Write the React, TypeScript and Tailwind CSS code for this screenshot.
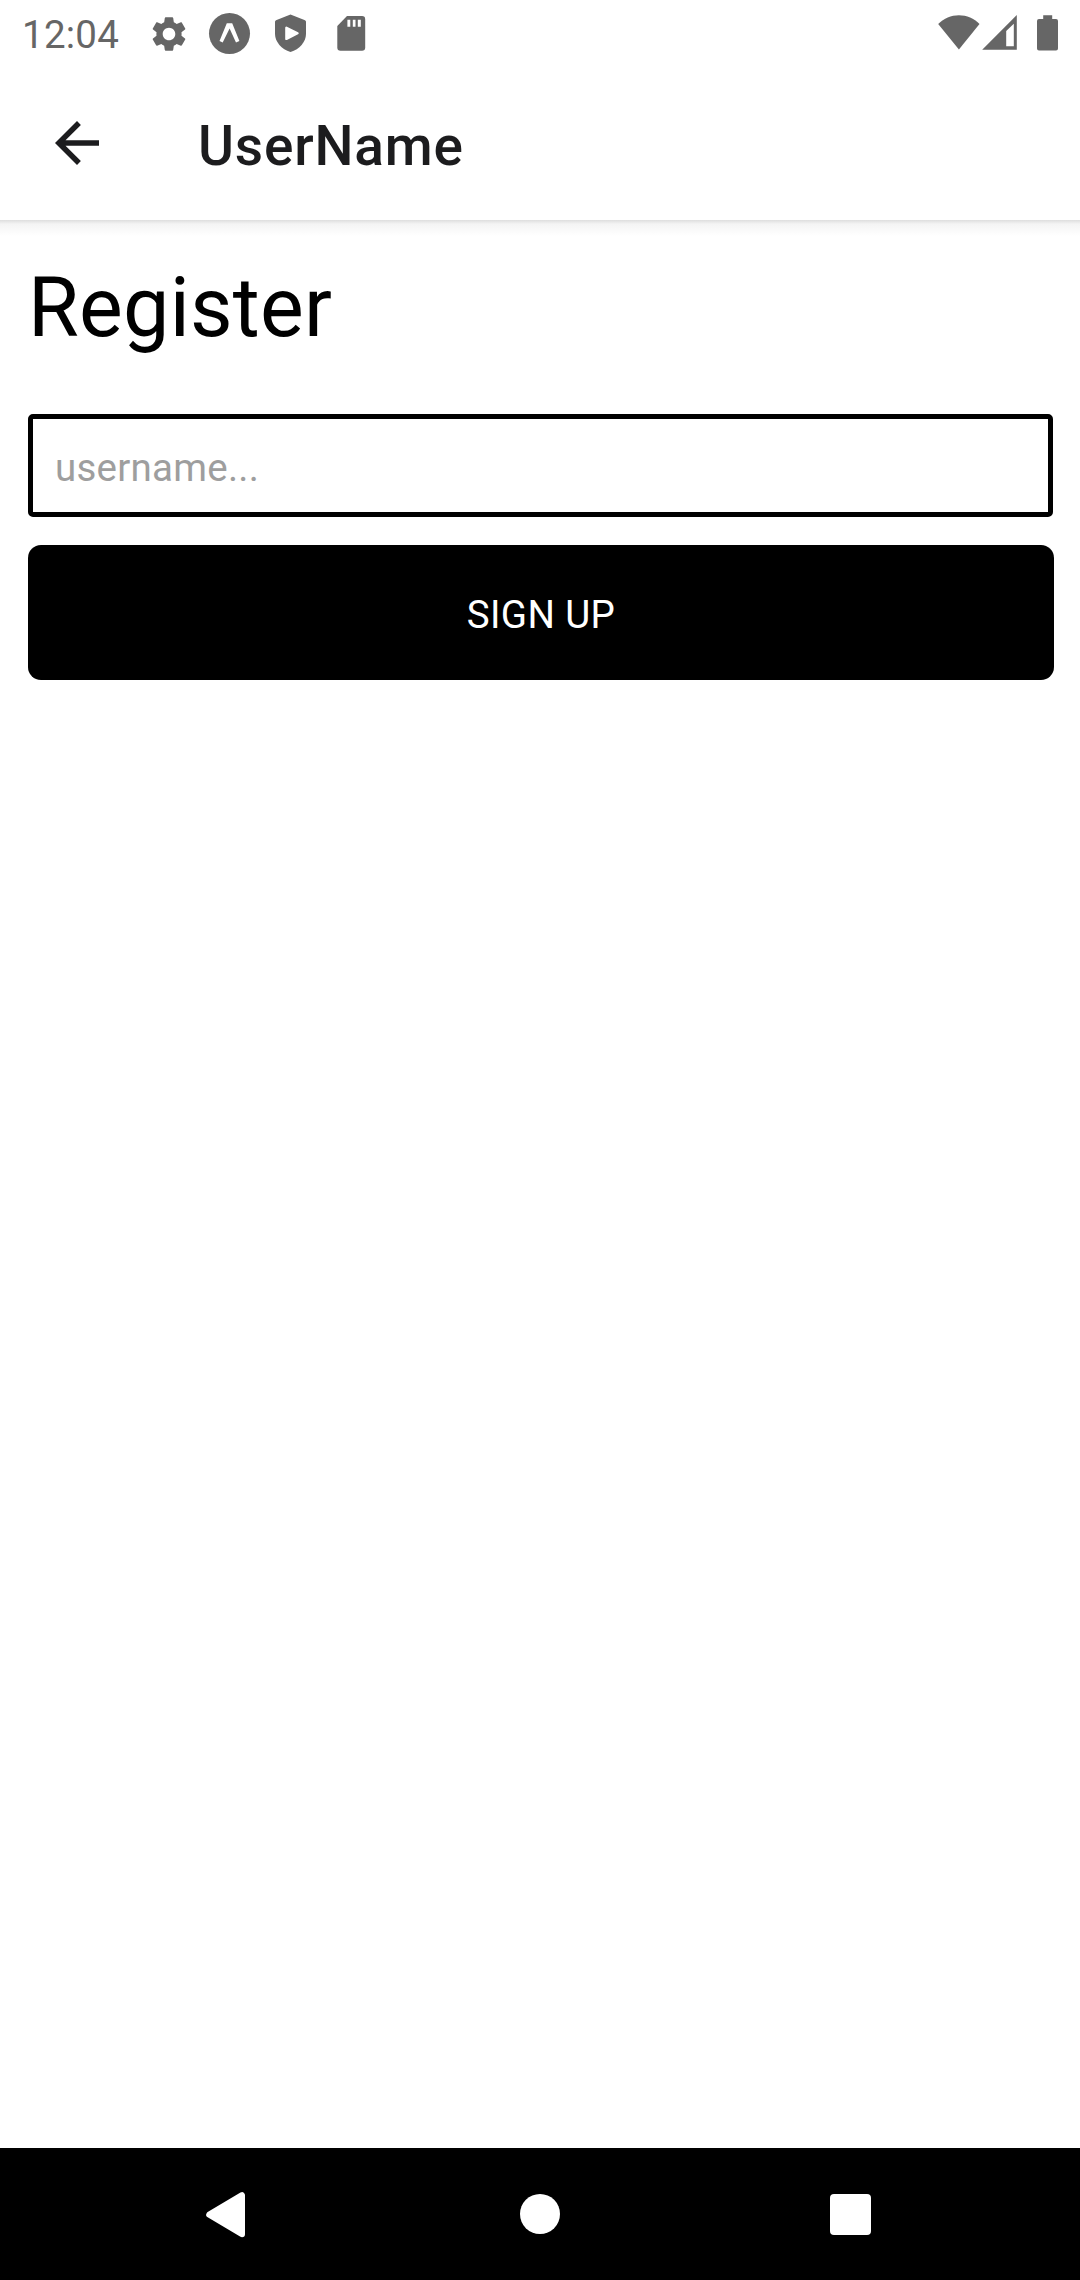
import React from "react";

function StatusBar() {
  return (
    <div className="flex h-[66px] shrink-0 items-start text-[#666666]">
      <span className="ml-[22px] w-[126px] pt-[12px] text-[38.5px] leading-[45px] tracking-[0.25px]">12:04</span>
      <svg className="mt-[12.5px] h-[42px] w-[42px]" viewBox="0 0 24 24" fill="currentColor">
        <path d="M19.14 12.94c.04-.3.06-.61.06-.94 0-.32-.02-.64-.07-.94l2.03-1.58c.18-.14.23-.41.12-.61l-1.92-3.32c-.12-.22-.37-.29-.59-.22l-2.39.96c-.5-.38-1.03-.7-1.62-.94l-.36-2.54c-.04-.24-.24-.41-.48-.41h-3.84c-.24 0-.43.17-.47.41l-.36 2.54c-.59.24-1.13.57-1.62.94l-2.39-.96c-.22-.08-.47 0-.59.22L2.74 8.87c-.12.21-.08.47.12.61l2.03 1.58c-.05.3-.09.63-.09.94s.02.64.07.94l-2.03 1.58c-.18.14-.23.41-.12.61l1.92 3.32c.12.22.37.29.59.22l2.39-.96c.5.38 1.03.7 1.62.94l.36 2.54c.05.24.24.41.48.41h3.84c.24 0 .44-.17.47-.41l.36-2.54c.59-.24 1.13-.56 1.62-.94l2.39.96c.22.08.47 0 .59-.22l1.92-3.32c.12-.22.07-.47-.12-.61l-2.01-1.58zM12 15.6c-1.98 0-3.6-1.62-3.6-3.6s1.62-3.6 3.6-3.6 3.6 1.62 3.6 3.6-1.62 3.6-3.6 3.6z" />
      </svg>
      <svg className="ml-[18px] mt-[12px] h-[43px] w-[43px]" viewBox="0 0 43 43">
        <circle cx="21.5" cy="21.5" r="20.5" fill="currentColor" />
        <path d="M18.8 11.3H24.2L31.4 29L28 30.5L21.6 16.6L14.7 30.5L11.5 29Z" fill="#fff" />
      </svg>
      <svg className="ml-[19px] mt-[12px] h-[43px] w-[42px]" viewBox="0 0 42 43">
        <path d="M20.5 2.4L35 8.2Q36 8.7 36 9.8V22C36 29.5 29.5 37.5 20.5 40C11.5 37.5 5 29.5 5 22V9.8Q5 8.7 6 8.2Z" fill="currentColor" />
        <path d="M16.4 15.7V26.9L27.5 21.3Z" fill="#fff" stroke="#fff" strokeWidth="2.4" strokeLinejoin="round" />
      </svg>
      <svg className="ml-[18px] mt-[12px] h-[43px] w-[42px]" viewBox="0 0 42 43">
        <path d="M17 4H32Q35.200 4 35.200 7.200V35.600Q35.200 38.800 32 38.800H10.500Q7.300 38.800 7.300 35.600V14Z" fill="currentColor" />
        <path d="M17.400 7.800H20.300V14.800H17.400ZM22.800 7.800H25.500V14.800H22.800ZM27.800 7.800H30.800V14.800H27.800Z" fill="#fff" />
      </svg>
      <div className="ml-auto mr-[22px] mt-[15px] flex">
        <svg className="h-[36px] w-[42px]" viewBox="0 0 42 36" fill="currentColor">
          <path d="M.2 9C6 3 13 .2 20.900 .2S36 3 41.500 9L20.900 34.400Z" />
        </svg>
        <svg className="ml-[2px] h-[36px] w-[35px]" viewBox="0 0 35 36">
          <path fillRule="evenodd" fill="currentColor" d="M34.800 0V34.800H.2ZM31.800 8.800L24.200 16.100V31.200H31.800Z" />
        </svg>
        <svg className="ml-[20px] h-[36px] w-[21px]" viewBox="0 0 21 36" fill="currentColor">
          <path d="M6.200 .2H15.200V4H19Q21 4 21 6V33.400Q21 35.400 19 35.400H2Q0 35.400 0 33.400V6Q0 4 2 4H6.200Z" />
        </svg>
      </div>
    </div>
  );
}

function Header() {
  return (
    <header className="relative flex h-[154px] shrink-0 items-start bg-white">
      <button aria-label="Back" className="ml-[44px] mt-[44px] h-[66px] w-[66px]">
        <svg className="h-[66px] w-[66px]" viewBox="0 0 24 24" fill="#1c1c1e">
          <path d="M20 11H7.830l5.590-5.590L12 4l-8 8 8 8 1.410-1.410L7.830 13H20v-2z" />
        </svg>
      </button>
      <h1 className="ml-[88px] mt-[48px] text-[55px] font-medium leading-[64px] tracking-[0.8px] text-[#1c1c1e]">UserName</h1>
      <div className="absolute inset-x-0 top-full h-[16px] bg-linear-to-b from-[#dedede] via-[#f4f4f4] via-25% to-white" />
    </header>
  );
}

function NavigationBar() {
  return (
    <nav className="flex h-[132px] shrink-0 items-start bg-black">
      <svg className="ml-[205px] mt-[43px] h-[48px] w-[41px]" viewBox="0 0 41 48">
        <path d="M4.200 23.700L37 4.200V43.200Z" fill="#fff" stroke="#fff" strokeWidth="6" strokeLinejoin="round" />
      </svg>
      <span className="ml-[274px] mt-[46px] size-[40px] rounded-full bg-white" />
      <span className="ml-[270px] mt-[46px] size-[41px] rounded-[4px] bg-white" />
    </nav>
  );
}

export default function App() {
  return (
    <div className="flex h-[2280px] w-[1080px] flex-col overflow-hidden bg-white font-['Roboto',sans-serif]">
      <StatusBar />
      <Header />
      <main className="flex flex-1 flex-col pl-[28px] pr-[26px]">
        <h2 className="mt-[39px] text-[82.5px] leading-[97px] tracking-[0.25px] text-black">Register</h2>
        <input
          className="mr-px mt-[58px] h-[103px] rounded-[5px] border-5 border-black px-[22px] pt-[4px] text-[38.5px] tracking-[0.25px] text-black outline-none placeholder:text-[#9e9e9e]"
          placeholder="username..."
        />
        <button className="mt-[28px] h-[135px] rounded-[13px] bg-black pt-[4px] text-[38.5px] tracking-[0.4px] text-white">SIGN UP</button>
      </main>
      <NavigationBar />
    </div>
  );
}
